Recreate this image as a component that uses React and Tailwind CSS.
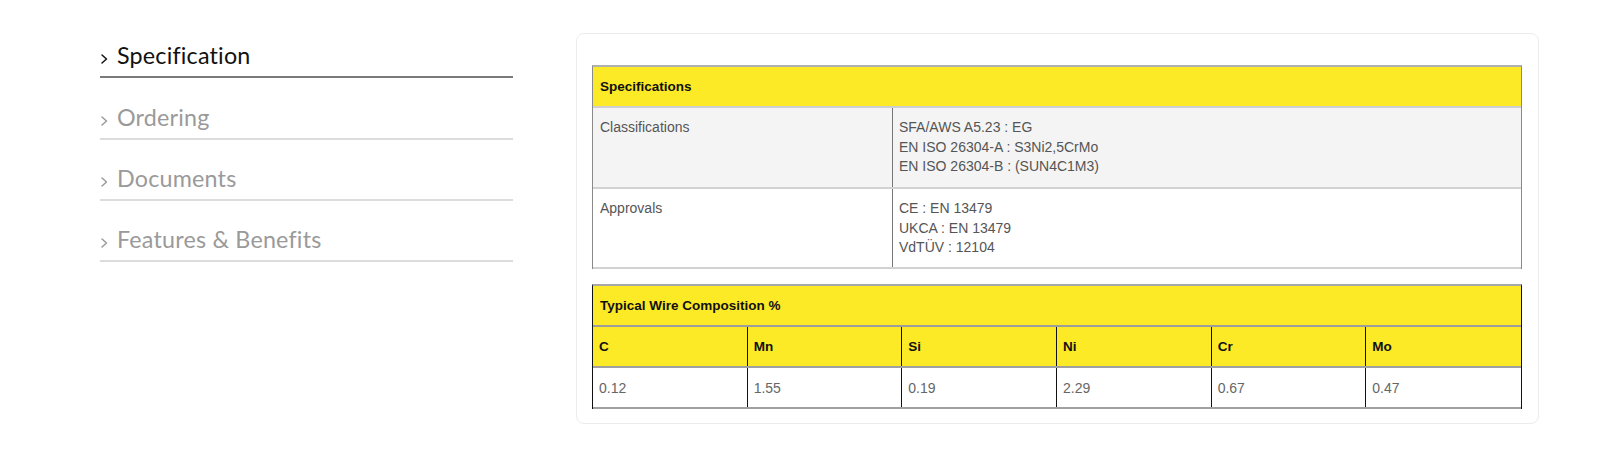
import React from "react";

const tabs = ["Specification", "Ordering", "Documents", "Features & Benefits"];

const composition = [
  ["C", "0.12"],
  ["Mn", "1.55"],
  ["Si", "0.19"],
  ["Ni", "2.29"],
  ["Cr", "0.67"],
  ["Mo", "0.47"],
];

function Chevron({ active }) {
  return (
    <svg width="9" height="12" viewBox="0 0 9 12" className="mr-[8px] mb-[4px] shrink-0">
      <path
        d="M2 2 L6.5 6 L2 10"
        fill="none"
        stroke={active ? "#111111" : "#9a9a9a"}
        strokeWidth="1.5"
        strokeLinecap="round"
        strokeLinejoin="round"
      />
    </svg>
  );
}

export default function App() {
  return (
    <div className="w-[1619px] h-[476px] bg-white flex items-start pl-[100px] pt-[17px] font-['Liberation_Sans',Arial,sans-serif]">
      {/* tabs */}
      <div className="w-[413px] shrink-0">
        {tabs.map((t, i) => (
          <div
            key={t}
            className={
              "h-[61.3px] flex items-end pb-[7px] border-b-2 " +
              (i === 0 ? "border-[#7a7a7a]" : "border-[#dcdcdc]")
            }
          >
            <Chevron active={i === 0} />
            <span
              className={
                "font-['Lato',sans-serif] text-[23.3px] leading-[28px] tracking-[0.2px] " +
                (i === 0 ? "text-[#111111]" : "text-[#9a9a9a]")
              }
            >
              {t}
            </span>
          </div>
        ))}
      </div>

      {/* card */}
      <div className="ml-[63px] mt-[16px] w-[963px] bg-white border border-[#ececec] rounded-lg pt-[31px] pl-[15px] pr-[16px] pb-[14px]">
        {/* specifications */}
        <div className="border-x border-[#8a8a8a] border-t-2 border-t-[#b0b0b0] text-[14px]">
          <div className="h-[41px] bg-[#fdea27] flex items-center px-[7px] pt-[2px] font-bold text-[13.5px] text-[#111111] border-b-2 border-[#cfcfcf]">
            Specifications
          </div>
          <div className="grid grid-cols-[300px_1fr] bg-[#f4f4f4] h-[81px] border-b-2 border-[#d2d2d2] text-[#555555] leading-[19.5px]">
            <div className="border-r border-[#777777] pl-[7px] pt-[10px]">Classifications</div>
            <div className="pl-[6px] pt-[10px]">
              <div>SFA/AWS A5.23 : EG</div>
              <div>EN ISO 26304-A : S3Ni2,5CrMo</div>
              <div>EN ISO 26304-B : (SUN4C1M3)</div>
            </div>
          </div>
          <div className="grid grid-cols-[300px_1fr] bg-white h-[80px] border-b-2 border-[#d2d2d2] text-[#555555] leading-[19.5px]">
            <div className="border-r border-[#777777] pl-[7px] pt-[10px]">Approvals</div>
            <div className="pl-[6px] pt-[10px]">
              <div>CE : EN 13479</div>
              <div>UKCA : EN 13479</div>
              <div>VdTÜV : 12104</div>
            </div>
          </div>
        </div>

        {/* composition */}
        <div className="mt-[15px] border-x border-[#111111] border-t-2 border-t-[#a8a8a8] text-[14px]">
          <div className="h-[41px] bg-[#fdea27] flex items-center px-[7px] pt-[2px] font-bold text-[13.5px] text-[#111111] border-b-2 border-[#9c9c9c]">
            Typical Wire Composition %
          </div>
          <div className="grid grid-cols-6 h-[41px] bg-[#fdea27] border-b-2 border-[#a0a0a0]">
            {composition.map(([el], i) => (
              <div
                key={el}
                className={
                  "flex items-center px-[6px] pt-[2px] font-bold text-[13.5px] text-[#111111] " +
                  (i < 5 ? "border-r border-[#111111]" : "")
                }
              >
                {el}
              </div>
            ))}
          </div>
          <div className="grid grid-cols-6 h-[41px] bg-white border-b-2 border-[#a0a0a0]">
            {composition.map(([el, v], i) => (
              <div
                key={el}
                className={
                  "flex items-center px-[6px] pt-[2px] text-[#666666] " +
                  (i < 5 ? "border-r border-[#111111]" : "")
                }
              >
                {v}
              </div>
            ))}
          </div>
        </div>
      </div>
    </div>
  );
}
